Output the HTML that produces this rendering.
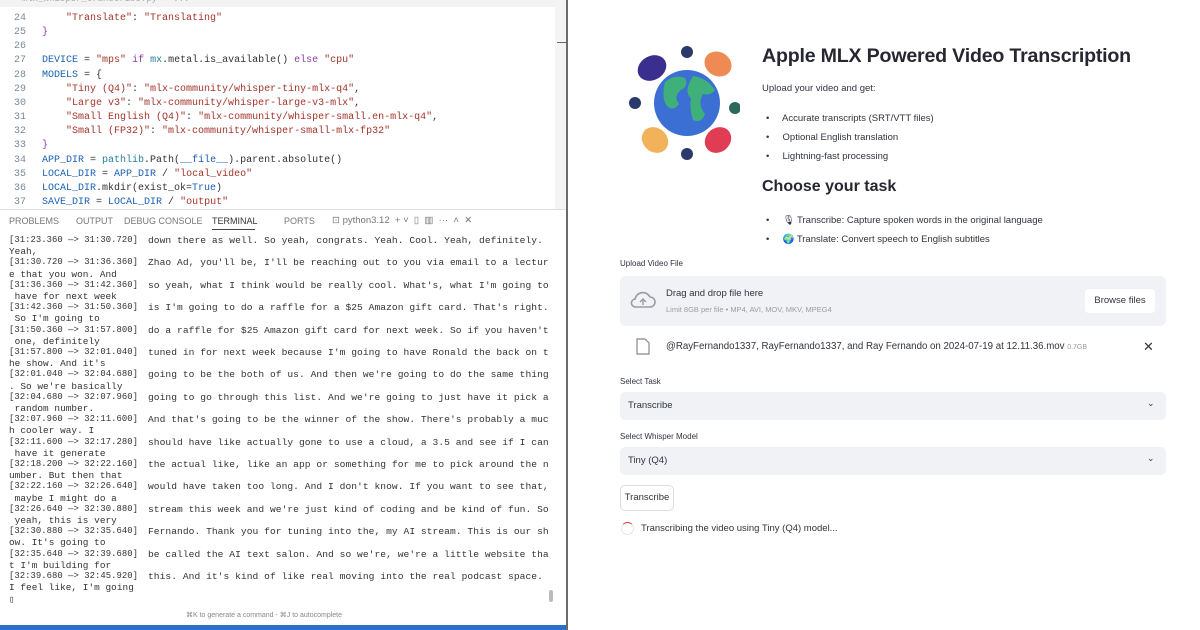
<!DOCTYPE html>
<html><head><meta charset="utf-8"><style>
*{margin:0;padding:0;box-sizing:border-box}
body{width:1200px;height:630px;overflow:hidden;background:#fff;position:relative;font-family:"Liberation Sans",sans-serif}
.ab{position:absolute;white-space:pre}
.code{font-family:"Liberation Mono",monospace;font-size:10px;color:#333}
.ln{color:#7a8a99}
.s{color:#a3342a}.k{color:#8b3fa0}.b{color:#1a5fb4}.t{color:#267f99}
.term{font-family:"Liberation Mono",monospace;font-size:9.6px;color:#333;letter-spacing:0.05px}
.ts{font-size:8.9px;vertical-align:top;line-height:11.2px}
.r{font-family:"Liberation Sans",sans-serif;color:#31333f}
</style></head><body>
<div class="ab" style="left:0;top:0;width:567px;height:7px;background:#f3f3f3"></div>
<div class="ab code" style="left:22px;top:-6px;font-size:9px;color:#aaa">mlx_whisper_transcribe.py &gt; ...</div>
<div class="ab" style="left:555px;top:0;width:12px;height:210px;background:#f4f4f4"></div>
<div class="ab" style="left:557px;top:42px;width:10px;height:1px;background:#666"></div>
<div class="ab code" style="left:14px;top:12px;line-height:14.15px"><span class="ln">24
25
26
27
28
29
30
31
32
33
34
35
36
37</span></div>
<div class="ab code" style="left:42px;top:12px;line-height:14.15px">    <span class="s">"Translate"</span>: <span class="s">"Translating"</span>
<span class="k">}</span>

<span class="b">DEVICE</span> = <span class="s">"mps"</span> <span class="k">if</span> <span class="t">mx</span>.metal.is_available() <span class="k">else</span> <span class="s">"cpu"</span>
<span class="b">MODELS</span> = {
    <span class="s">"Tiny (Q4)"</span>: <span class="s">"mlx-community/whisper-tiny-mlx-q4"</span>,
    <span class="s">"Large v3"</span>: <span class="s">"mlx-community/whisper-large-v3-mlx"</span>,
    <span class="s">"Small English (Q4)"</span>: <span class="s">"mlx-community/whisper-small.en-mlx-q4"</span>,
    <span class="s">"Small (FP32)"</span>: <span class="s">"mlx-community/whisper-small-mlx-fp32"</span>
<span class="k">}</span>
<span class="b">APP_DIR</span> = <span class="t">pathlib</span>.Path(<span class="b">__file__</span>).parent.absolute()
<span class="b">LOCAL_DIR</span> = <span class="b">APP_DIR</span> / <span class="s">"local_video"</span>
<span class="b">LOCAL_DIR</span>.mkdir(exist_ok=<span class="b">True</span>)
<span class="b">SAVE_DIR</span> = <span class="b">LOCAL_DIR</span> / <span class="s">"output"</span></div>
<div class="ab" style="left:0;top:209px;width:567px;height:1px;background:#ddd"></div>
<div class="ab" style="left:0;top:210px;width:567px;height:23px;background:#fff"></div>
<div class="ab" style="left:9px;top:216px;font-size:9px;color:#777">PROBLEMS</div>
<div class="ab" style="left:76px;top:216px;font-size:9px;color:#777">OUTPUT</div>
<div class="ab" style="left:124px;top:216px;font-size:9px;color:#777">DEBUG CONSOLE</div>
<div class="ab" style="left:212px;top:216px;font-size:9px;color:#333">TERMINAL</div>
<div class="ab" style="left:212px;top:229px;width:43px;height:1px;background:#444"></div>
<div class="ab" style="left:284px;top:216px;font-size:9px;color:#777">PORTS</div>
<div class="ab" style="left:332px;top:215px;font-size:9.5px;color:#777">⊡ python3.12  + ˅  ▯  ▥  ···  ˄  ✕</div>
<div class="ab" style="left:549px;top:590px;width:4px;height:12px;background:#bbb;border-radius:2px"></div>

<div class="ab term" style="left:9px;top:235px;line-height:11.2px;font-size:9.4px"><span class="ts">[31:23.360 —&gt; 31:30.720]</span>
Yeah,
<span class="ts">[31:30.720 —&gt; 31:36.360]</span>
e that you won. And
<span class="ts">[31:36.360 —&gt; 31:42.360]</span>
 have for next week
<span class="ts">[31:42.360 —&gt; 31:50.360]</span>
 So I'm going to
<span class="ts">[31:50.360 —&gt; 31:57.800]</span>
 one, definitely
<span class="ts">[31:57.800 —&gt; 32:01.040]</span>
he show. And it's
<span class="ts">[32:01.040 —&gt; 32:04.680]</span>
. So we're basically
<span class="ts">[32:04.680 —&gt; 32:07.960]</span>
 random number.
<span class="ts">[32:07.960 —&gt; 32:11.600]</span>
h cooler way. I
<span class="ts">[32:11.600 —&gt; 32:17.280]</span>
 have it generate
<span class="ts">[32:18.200 —&gt; 32:22.160]</span>
umber. But then that
<span class="ts">[32:22.160 —&gt; 32:26.640]</span>
 maybe I might do a
<span class="ts">[32:26.640 —&gt; 32:30.880]</span>
 yeah, this is very
<span class="ts">[32:30.880 —&gt; 32:35.640]</span>
ow. It's going to
<span class="ts">[32:35.640 —&gt; 32:39.680]</span>
t I'm building for
<span class="ts">[32:39.680 —&gt; 32:45.920]</span>
I feel like, I'm going
▯</div>
<div class="ab term" style="left:148px;top:230px;line-height:22.4px;font-size:9.6px">down there as well. So yeah, congrats. Yeah. Cool. Yeah, definitely.
Zhao Ad, you'll be, I'll be reaching out to you via email to a lectur
so yeah, what I think would be really cool. What's, what I'm going to
is I'm going to do a raffle for a $25 Amazon gift card. That's right.
do a raffle for $25 Amazon gift card for next week. So if you haven't
tuned in for next week because I'm going to have Ronald the back on t
going to be the both of us. And then we're going to do the same thing
going to go through this list. And we're going to just have it pick a
And that's going to be the winner of the show. There's probably a muc
should have like actually gone to use a cloud, a 3.5 and see if I can
the actual like, like an app or something for me to pick around the n
would have taken too long. And I don't know. If you want to see that,
stream this week and we're just kind of coding and be kind of fun. So
Fernando. Thank you for tuning into the, my AI stream. This is our sh
be called the AI text salon. And so we're, we're a little website tha
this. And it's kind of like real moving into the real podcast space.</div>
<div class="ab" style="left:186px;top:611px;font-size:7px;color:#888">⌘K to generate a command - ⌘J to autocomplete</div>
<div class="ab" style="left:0;top:625px;width:567px;height:5px;background:#2a6fc9"></div>
<div class="ab" style="left:566px;top:0;width:2px;height:630px;background:#6b6b6b"></div>

<svg class="ab" style="left:625px;top:42px" width="115" height="120" viewBox="0 0 115 120">
<circle cx="62" cy="61" r="33" fill="#3b6fd4"/>
<path d="M40 40 q10-8 20-4 q4 8-4 12 q-8 6-2 14 q-6 8-12 2 q-6-8-2-24z" fill="#3fb07a"/>
<path d="M68 34 q14 2 22 14 q-4 6-12 4 q-6 10 2 20 q-4 10-12 6 q-4-12-2-22 q-8-6 2-22z" fill="#3fb07a"/>
<ellipse cx="27" cy="26" rx="15" ry="12" fill="#3a2f8e" transform="rotate(-30 27 26)"/>
<ellipse cx="93" cy="22" rx="14" ry="12" fill="#f08a55" transform="rotate(30 93 22)"/>
<ellipse cx="30" cy="98" rx="14" ry="12" fill="#f1b25a" transform="rotate(40 30 98)"/>
<ellipse cx="93" cy="98" rx="14" ry="12" fill="#e03c54" transform="rotate(-40 93 98)"/>
<circle cx="62" cy="10" r="6" fill="#2b3a6a"/><circle cx="62" cy="112" r="6" fill="#2b3a6a"/>
<circle cx="10" cy="61" r="6" fill="#2b3a6a"/><circle cx="110" cy="66" r="6" fill="#2b6a5a"/>
</svg>
<div class="ab r" style="left:762px;top:45px;font-size:19.6px;font-weight:bold;color:#262730;letter-spacing:-0.2px">Apple MLX Powered Video Transcription</div>
<div class="ab r" style="left:762px;top:83px;font-size:9.5px">Upload your video and get:</div>
<div class="ab r" style="left:766px;top:109px;font-size:9.5px;line-height:19px">•     Accurate transcripts (SRT/VTT files)
•     Optional English translation
•     Lightning-fast processing</div>
<div class="ab r" style="left:762px;top:178px;font-size:16px;font-weight:bold;color:#262730">Choose your task</div>
<div class="ab r" style="left:766px;top:211px;font-size:9.5px;line-height:19px">•     🎙 Transcribe: Capture spoken words in the original language
•     🌍 Translate: Convert speech to English subtitles</div>
<div class="ab r" style="left:620px;top:259px;font-size:8px">Upload Video File</div>
<div class="ab" style="left:620px;top:276px;width:546px;height:50px;background:#f0f2f6;border-radius:6px"></div>
<svg class="ab" style="left:629px;top:290px" width="28" height="20" viewBox="0 0 28 20"><path d="M7 17h14a5 5 0 0 0 0-10 8 8 0 0 0-15 2 4 4 0 0 0 1 8z" fill="none" stroke="#9a9ca3" stroke-width="1.6"/><path d="M14 15V9m-3 3 3-3 3 3" stroke="#9a9ca3" stroke-width="1.4" fill="none"/></svg>
<div class="ab r" style="left:666px;top:288px;font-size:9.5px">Drag and drop file here</div>
<div class="ab r" style="left:666px;top:305px;font-size:7.5px;color:#9a9ca3">Limit 8GB per file • MP4, AVI, MOV, MKV, MPEG4</div>
<div class="ab r" style="left:1085px;top:289px;width:70px;height:24px;background:#fff;border-radius:4px;font-size:9.5px;text-align:center;line-height:24px">Browse files</div>
<svg class="ab" style="left:636px;top:338px" width="14" height="17" viewBox="0 0 14 17"><path d="M1 1h8l4 4v11H1z" fill="none" stroke="#888" stroke-width="1.2"/></svg>
<div class="ab r" style="left:666px;top:341px;font-size:9.7px">@RayFernando1337, RayFernando1337, and Ray Fernando on 2024-07-19 at 12.11.36.mov <span style="font-size:7px;color:#999">0.7GB</span></div>
<div class="ab r" style="left:1143px;top:339px;font-size:13px">✕</div>
<div class="ab r" style="left:620px;top:377px;font-size:8px">Select Task</div>
<div class="ab r" style="left:620px;top:392px;width:546px;height:28px;background:#f0f2f6;border-radius:5px;font-size:9.5px;line-height:28px;padding-left:8px">Transcribe</div>
<div class="ab r" style="left:1147px;top:398px;font-size:9px">⌄</div>
<div class="ab r" style="left:620px;top:432px;font-size:8px">Select Whisper Model</div>
<div class="ab r" style="left:620px;top:447px;width:546px;height:28px;background:#f0f2f6;border-radius:5px;font-size:9.5px;line-height:28px;padding-left:8px">Tiny (Q4)</div>
<div class="ab r" style="left:1147px;top:453px;font-size:9px">⌄</div>
<div class="ab r" style="left:620px;top:485px;width:54px;height:26px;background:#fff;border:1px solid #dcdde2;border-radius:5px;font-size:9.5px;line-height:24px;text-align:center">Transcribe</div>
<div class="ab" style="left:621px;top:522px;width:13px;height:13px;border:1.5px solid #e6e6e6;border-top-color:#d33;border-radius:50%"></div>
<div class="ab r" style="left:641px;top:523px;font-size:9.5px">Transcribing the video using Tiny (Q4) model...</div>
</body></html>
